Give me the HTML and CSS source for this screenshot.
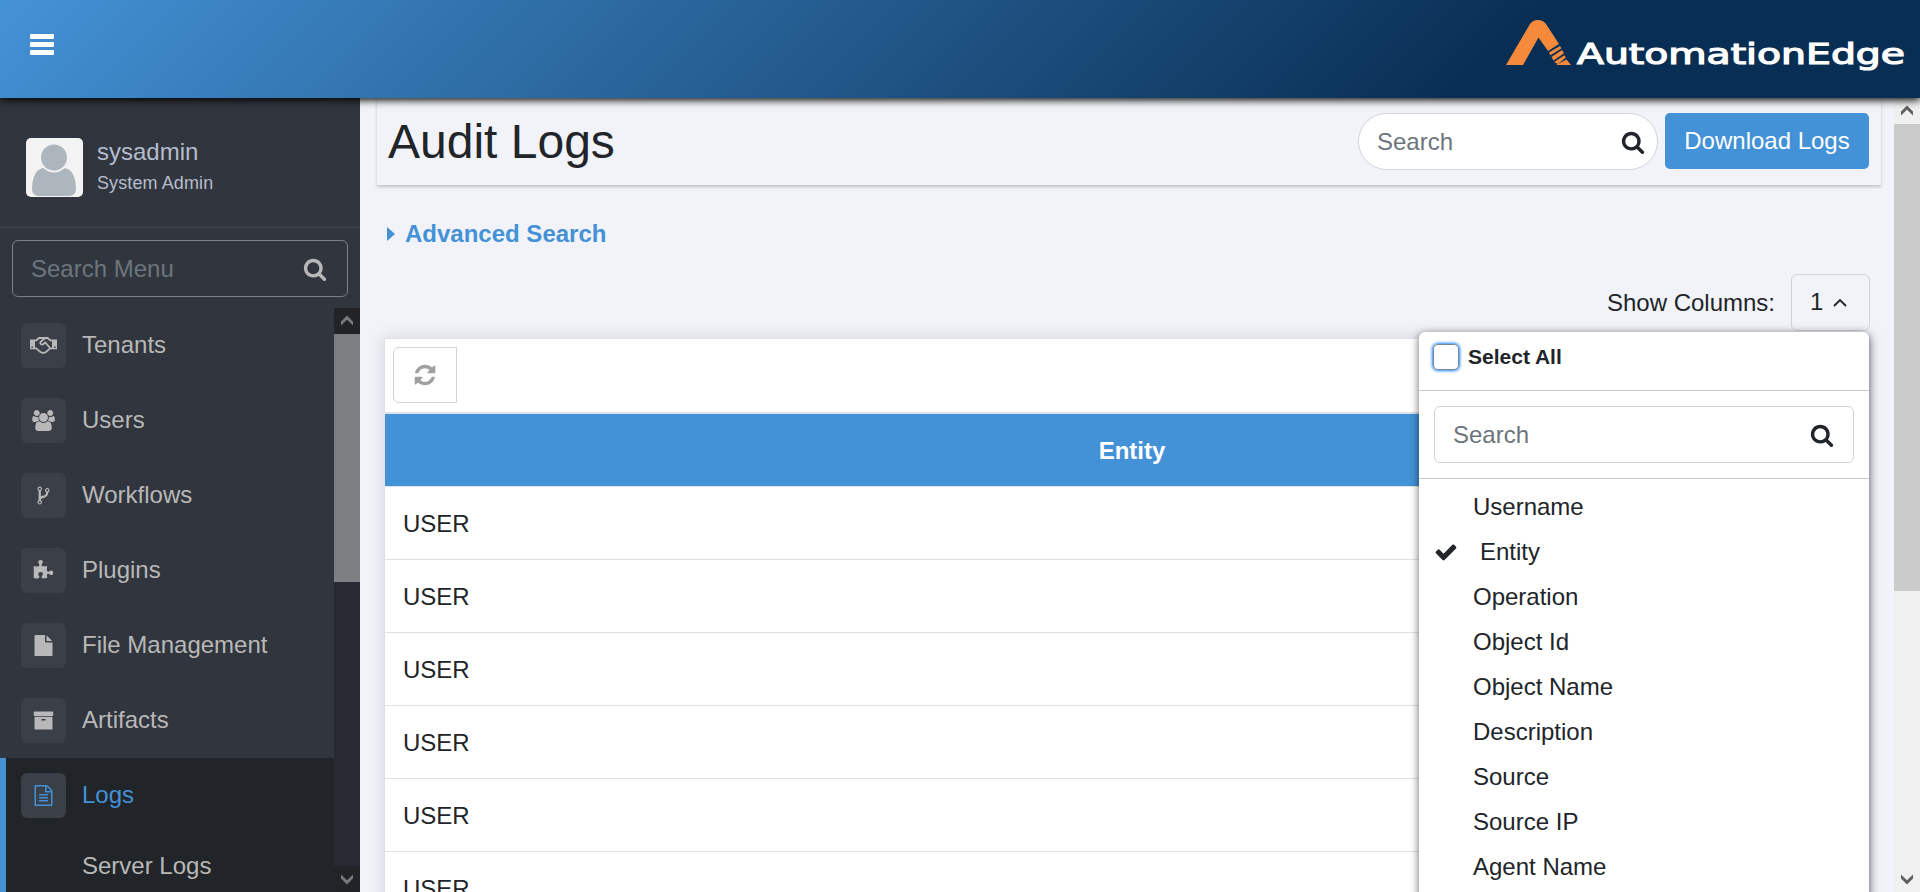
FILE: index.html
```html
<!DOCTYPE html>
<html lang="en">
<head>
<meta charset="utf-8">
<title>Audit Logs</title>
<link rel="stylesheet" href="styles.css">
</head>
<body>
<svg class="defs" aria-hidden="true">
  <symbol id="search" viewBox="0 0 1792 1792"><path d="M1216 832q0-185-131.5-316.5t-316.5-131.5-316.5 131.5-131.5 316.5 131.5 316.5 316.5 131.5 316.5-131.5 131.5-316.5zm512 832q0 52-38 90t-90 38q-54 0-90-38l-343-342q-179 124-399 124-143 0-273.5-55.5t-225-150-150-225-55.5-273.5 55.5-273.5 150-225 225-150 273.5-55.5 273.5 55.5 225 150 150 225 55.5 273.5q0 220-124 399l343 343q37 37 37 90z"/></symbol>
  <symbol id="refresh" viewBox="0 0 1792 1792"><path d="M1639 1056q0 5-1 7-64 268-268 434.5t-478 166.5q-146 0-282.5-55t-243.5-157l-129 129q-19 19-45 19t-45-19-19-45v-448q0-26 19-45t45-19h448q26 0 45 19t19 45-19 45l-137 137q71 66 161 102t187 36q134 0 250-65t186-179q11-17 53-117 8-23 30-23h192q13 0 22.5 9.5t9.5 22.5zm25-800v448q0 26-19 45t-45 19h-448q-26 0-45-19t-19-45 19-45l138-138q-148-137-349-137-134 0-250 65t-186 179q-11 17-53 117-8 23-30 23h-199q-13 0-22.5-9.5t-9.5-22.5v-7q65-268 270-434.5t480-166.5q146 0 284 55.5t245 156.5l130-129q19-19 45-19t45 19 19 45z"/></symbol>
  <symbol id="users" viewBox="64 0 1920 1792"><path d="M657 896q-162 5-265 128h-134q-82 0-138-40.5t-56-118.5q0-353 124-353 6 0 43.5 21t97.5 42.5 119 21.5q67 0 133-23-5 37-5 66 0 159 93 256zm1071 637q0 120-73 189.5t-194 69.5h-874q-121 0-194-69.5t-73-189.5q0-53 3.5-103.5t14-109 26.5-108.5 43-97.5 62-81 85.5-53.5 111.5-20q10 0 43 21.5t73 48 107 48 135 21.5 135-21.5 107-48 73-48 43-21.5q61 0 111.5 20t85.5 53.5 62 81 43 97.5 26.5 108.5 14 109 3.5 103.5zm-1024-1277q0 106-75 181t-181 75-181-75-75-181 75-181 181-75 181 75 75 181zm704 384q0 159-112.5 271.5t-271.5 112.5-271.5-112.5-112.5-271.5 112.5-271.5 271.5-112.5 271.5 112.5 112.5 271.5zm576 225q0 78-56 118.5t-138 40.5h-134q-103-123-265-128 93-97 93-256 0-29-5-66 66 23 133 23 59 0 119-21.5t97.5-42.5 43.5-21q124 0 124 353zm-128-609q0 106-75 181t-181 75-181-75-75-181 75-181 181-75 181 75 75 181z"/></symbol>
  <symbol id="fork" viewBox="0 0 1792 1792"><path d="M672 1472q0-40-28-68t-68-28-68 28-28 68 28 68 68 28 68-28 28-68zm0-1152q0-40-28-68t-68-28-68 28-28 68 28 68 68 28 68-28 28-68zm640 128q0-40-28-68t-68-28-68 28-28 68 28 68 68 28 68-28 28-68zm96 0q0 52-26 96.5t-70 69.5q-2 287-226 414-67 38-203 81-128 40-169.5 71t-41.5 100v26q44 25 70 69.5t26 96.5q0 80-56 136t-136 56-136-56-56-136q0-52 26-96.5t70-69.5v-820q-44-25-70-69.5t-26-96.5q0-80 56-136t136-56 136 56 56 136q0 52-26 96.5t-70 69.5v497q54-26 154-57 55-17 87.5-29.5t70.5-31 59-39.5 40.5-51 28-69.5 8.5-91.5q-44-25-70-69.5t-26-96.5q0-80 56-136t136-56 136 56 56 136z"/></symbol>
  <symbol id="puzzle" viewBox="0 0 1792 1792"><path d="M1728 1098q0 81-44.5 135t-123.5 54q-41 0-77.5-17.5t-59-38-56.5-38-71-17.5q-110 0-110 124 0 39 16 115t15 115v5q-22 0-33 1-34 3-97.5 11.5t-115.5 13.5-98 5q-61 0-103-26.5t-42-83.5q0-37 17.5-71t38-56.5 38-59 17.5-77.5q0-79-54-123.5t-135-44.5q-84 0-143 45.5t-59 127.5q0 43 15 83t33.5 64.5 33.5 53 15 50.5q0 45-46 89-37 35-117 35-95 0-245-24-9-2-27.5-4t-27.5-4l-13-2q-1 0-3-1-2 0-2-1v-1024q2 1 17.5 3.5t34 5 21.5 3.5q150 24 245 24 80 0 117-35 46-44 46-89 0-22-15-50.5t-33.5-53-33.5-64.5-15-83q0-82 59-127.5t144-45.5q80 0 134 44.5t54 123.5q0 41-17.5 77.5t-38 59-38 56.5-17.5 71q0 57 42 83.5t103 26.5q64 0 180-15t163-17v2q-1 2-3.5 17.5t-5 34-3.5 21.5q-24 150-24 245 0 80 35 117 44 46 89 46 22 0 50.5-15t53-33.5 64.500-33.500 83-15q82 0 127.500 59t45.500 143z"/></symbol>
  <symbol id="file" viewBox="0 0 1792 1792"><path d="M1152 512v-472q22 14 36 28l408 408q14 14 28 36h-472zm-128 32q0 40 28 68t68 28h544v1056q0 40-28 68t-68 28h-1344q-40 0-68-28t-28-68v-1600q0-40 28-68t68-28h800v544z"/></symbol>
  <symbol id="archive" viewBox="0 0 1792 1792"><path d="M1088 832q0-26-19-45t-45-19h-256q-26 0-45 19t-19 45 19 45 45 19h256q26 0 45-19t19-45zm576-192v960q0 26-19 45t-45 19h-1408q-26 0-45-19t-19-45v-960q0-26 19-45t45-19h1408q26 0 45 19t19 45zm64-448v256q0 26-19 45t-45 19h-1536q-26 0-45-19t-19-45v-256q0-26 19-45t45-19h1536q26 0 45 19t19 45z"/></symbol>
  <symbol id="filetext" viewBox="0 0 1792 1792"><path d="M1596 380q28 28 48 76t20 88v1152q0 40-28 68t-68 28h-1344q-40 0-68-28t-28-68v-1600q0-40 28-68t68-28h896q40 0 88 20t76 48zm-444-244v376h376q-10-29-22-41l-313-313q-12-12-41-22zm384 1528v-1024h-416q-40 0-68-28t-28-68v-416h-768v1536h1280zm-1024-864q0-14 9-23t23-9h704q14 0 23 9t9 23v64q0 14-9 23t-23 9h-704q-14 0-23-9t-9-23v-64zm736 224q14 0 23 9t9 23v64q0 14-9 23t-23 9h-704q-14 0-23-9t-9-23v-64q0-14 9-23t23-9h704zm0 256q14 0 23 9t9 23v64q0 14-9 23t-23 9h-704q-14 0-23-9t-9-23v-64q0-14 9-23t23-9h704z"/></symbol>
  <symbol id="check" viewBox="0 0 1792 1792"><path d="M1671 566q0 40-28 68l-724 724-136 136q-28 28-68 28t-68-28l-136-136-362-362q-28-28-28-68t28-68l136-136q28-28 68-28t68 28l294 295 656-657q28-28 68-28t68 28l136 136q28 28 28 68z"/></symbol>
  <symbol id="handshake" viewBox="0 0 27 17">
    <path d="M0 2.500h5v9.800H0zM22 2.500h5v9.800h-5zM1.500 9.600v1.400h1.400V9.600zM24.100 9.600v1.400h1.400V9.600z" fill-rule="evenodd"/>
    <path d="M5 3.300h1.500L9 1h8.500l2.800 2.300H22M5 11.400h1.200l4.300 3.700q1.600 1 3.200.8l2-.6 4.500-3.900h1.800M15.200 1 10.700 4.800q-.9 1.200.2 2.300 1.300 1 2.600-.1l1.900-1.600 4.800 5.800" fill="none" stroke="currentColor" stroke-width="1.800"/>
  </symbol>
  <symbol id="up" viewBox="0 0 12 11"><path d="M0 6.500 6 .5l6 6V10.500L6 4.800 0 10.500z"/></symbol>
</svg>

<header class="topbar">
  <button class="burger" aria-label="Toggle menu"><i></i><i></i><i></i></button>
  <svg class="logo" width="401" height="60" viewBox="0 0 401 60">
    <path fill="#f58a3c" d="M0 50 24 9Q27 5 32 5T40 9L53 29 42 36 32.500 22.500 17 50Z"/>
    <path fill="#f58a3c" d="m43 37.500 11-6.500 1.500 2.300-11 7zM45.500 42l10.500-7 2 3.200-10.500 7.300zM48.300 47l10-6.700 1.500 2.500-8 6.200zM50 50l10.500-5.500L65 50z"/>
    <text x="71" y="49" textLength="328" lengthAdjust="spacingAndGlyphs" class="logo-text">AutomationEdge</text>
  </svg>
</header>

<div class="shell">
  <aside class="sidebar">
    <div class="profile">
      <svg class="avatar" viewBox="0 0 57 59"><rect width="57" height="59" rx="5" fill="#f3f3f3"/><path d="M6 50Q7 30 19 30Q28 38 37 30Q49 30 50 50Q50 58 43 58H13Q6 58 6 50Z" fill="#adb5bd"/><circle cx="28" cy="20" r="14.500" fill="#f3f3f3"/><circle cx="28" cy="19.500" r="13" fill="#adb5bd"/></svg>
      <div class="who"><div class="name">sysadmin</div><div class="role">System Admin</div></div>
    </div>
    <div class="menu-search"><span>Search Menu</span><svg class="ico24"><use href="#search"/></svg></div>
    <div class="menu-wrap">
      <nav class="menu">
        <a class="item"><span class="tile"><svg class="hand"><use href="#handshake"/></svg></span>Tenants</a>
        <a class="item"><span class="tile"><svg class="wide"><use href="#users"/></svg></span>Users</a>
        <a class="item"><span class="tile"><svg><use href="#fork"/></svg></span>Workflows</a>
        <a class="item"><span class="tile"><svg><use href="#puzzle"/></svg></span>Plugins</a>
        <a class="item"><span class="tile"><svg><use href="#file"/></svg></span>File Management</a>
        <a class="item"><span class="tile"><svg><use href="#archive"/></svg></span>Artifacts</a>
        <div class="group">
          <a class="item active"><span class="tile"><svg><use href="#filetext"/></svg></span>Logs</a>
          <a class="sub">Server Logs</a>
        </div>
      </nav>
      <div class="scroll dark">
        <div class="btn"><svg><use href="#up"/></svg></div>
        <div class="thumb"></div>
        <div class="btn end"><svg class="down"><use href="#up"/></svg></div>
      </div>
    </div>
  </aside>

  <main class="content">
    <div class="page-head">
      <h1>Audit Logs</h1>
      <div class="pill"><span>Search</span><svg class="ico24"><use href="#search"/></svg></div>
      <button class="download">Download Logs</button>
    </div>
    <div class="advanced"><i class="caret"></i>Advanced Search</div>
    <div class="columns">
      <span>Show Columns:</span>
      <div class="picker">
        <button class="count">1<svg class="chev" viewBox="0 0 14 9"><path d="M1 8 7 2l6 6" fill="none" stroke="#212529" stroke-width="1.900"/></svg></button>
        <div class="dropdown">
          <label class="all"><span class="box"></span>Select All</label>
          <div class="filter"><div class="field"><span>Search</span><svg class="ico24"><use href="#search"/></svg></div></div>
          <ul class="options">
            <li>Username</li>
            <li class="on"><svg class="ico24"><use href="#check"/></svg>Entity</li>
            <li>Operation</li>
            <li>Object Id</li>
            <li>Object Name</li>
            <li>Description</li>
            <li>Source</li>
            <li>Source IP</li>
            <li>Agent Name</li>
          </ul>
        </div>
      </div>
    </div>
    <section class="card">
      <div class="tools"><button class="reload" aria-label="Refresh"><svg class="ico24"><use href="#refresh"/></svg></button></div>
      <div class="thead">Entity</div>
      <div class="row">USER</div>
      <div class="row">USER</div>
      <div class="row">USER</div>
      <div class="row">USER</div>
      <div class="row">USER</div>
      <div class="row">USER</div>
    </section>
  </main>
  <div class="scroll light">
    <div class="btn"><svg><use href="#up"/></svg></div>
    <div class="thumb"></div>
    <div class="btn end"><svg class="down"><use href="#up"/></svg></div>
  </div>
</div>
</body>
</html>
```
FILE: styles.css
```css
* { box-sizing: border-box; }
body {
  margin: 0;
  height: 892px;
  overflow: hidden;
  display: flex;
  flex-direction: column;
  font: 24px/36px "Liberation Sans", Arial, sans-serif;
  color: #212529;
  background: #f2f3f8;
}
button { font: inherit; color: inherit; padding: 0; border: 0; background: none; }
svg { fill: currentColor; display: block; flex: none; }
.defs { position: absolute; width: 0; height: 0; }
.ico24 { width: 24px; height: 24px; }

.topbar {
  flex: none;
  height: 98px;
  display: flex;
  justify-content: space-between;
  padding: 15px 13px 0 30px;
  background: linear-gradient(135deg, #4492d6 0%, #092e53 77%);
  box-shadow: 0 2px 8px #000;
  position: relative;
  z-index: 5;
}
.burger { width: 24px; padding-top: 19px; display: flex; flex-direction: column; gap: 3px; }
.burger i { height: 5px; width: 24px; background: #fff; border-radius: 1px; }
.logo-text { font: 28px "DejaVu Sans", sans-serif; fill: #fff; stroke: #fff; stroke-width: 1.2px; }

.shell { flex: 1; min-height: 0; display: flex; }
.sidebar { width: 360px; flex: none; background: #31353d; display: flex; flex-direction: column; color: #b8b8b8; }
.profile { height: 130px; flex: none; border-bottom: 1px solid #43474f; padding: 40px 26px 0; display: flex; gap: 14px; }
.avatar { width: 57px; height: 59px; }
.who { color: #b6bccc; }
.name { line-height: 28px; }
.role { font-size: 18px; line-height: 27px; margin-top: 4px; letter-spacing: .1px; }
.menu-search {
  margin: 12px 12px 11px;
  height: 57px;
  flex: none;
  border: 1px solid #7c8087;
  border-radius: 6px;
  display: flex;
  align-items: center;
  justify-content: space-between;
  padding: 0 20px 0 18px;
  color: #6c757d;
}
.menu-search svg { color: #b8b8b8; }
.menu-wrap { flex: 1; min-height: 0; display: flex; }
.menu { flex: 1; overflow: hidden; }
.item { display: flex; align-items: center; height: 75px; padding: 0 0 2px 21px; gap: 16px; }
.tile { width: 45px; height: 45px; margin-top: 2px; border-radius: 6px; background: #3a3f48; display: grid; place-items: center; }
.tile svg { width: 21px; height: 21px; }
.tile .wide { width: 23px; }
.tile .hand { width: 27px; height: 17px; }
.group { background: #212529; border-left: 6px solid #4391d6; height: 200px; }
.group .item { padding-left: 15px; color: #4391d6; }
.sub { display: block; padding: 15px 0 0 76px; }

.scroll { width: 26px; flex: none; display: flex; flex-direction: column; }
.scroll .btn { height: 26px; flex: none; display: grid; place-items: center; padding-bottom: 2px; }
.scroll svg { width: 12px; height: 11px; }
.scroll .down { transform: rotate(180deg); }
.scroll .end { margin-top: auto; padding-bottom: 0; }
.dark { background: #282a33; color: #77787b; }
.dark .btn { background: #222327; }
.dark .thumb { height: 248px; background: #7d7e81; }
.light { background: #f0f0f0; color: #606060; }
.light .thumb { height: 467px; background: #cbcbcb; }

.content { flex: 1; min-width: 0; padding: 0 13px 0 17px; overflow: hidden; }
.page-head {
  height: 87px;
  display: flex;
  align-items: flex-start;
  padding: 15px 12px 0 11px;
  box-shadow: 0 2px 3px rgba(0, 0, 0, .2);
}
h1 { margin: 1px auto 0 0; font-weight: 400; font-size: 48px; line-height: 56px; }
.pill, .field {
  height: 57px;
  border: 1px solid #ced4da;
  background: #fff;
  display: flex;
  align-items: center;
  justify-content: space-between;
}
.pill { width: 300px; border-radius: 29px; padding: 0 12px 0 18px; margin-right: 7px; }
.pill span, .field span { color: #6c757d; }
.download { width: 204px; height: 56px; border-radius: 5px; background: #4391d6; color: #fff; }
.advanced { display: flex; align-items: center; gap: 10px; padding-left: 10px; margin-top: 31px; font-weight: 700; color: #4391d6; }
.caret { border-left: 8px solid #4391d6; border-top: 7px solid transparent; border-bottom: 7px solid transparent; }
.columns { display: flex; justify-content: flex-end; align-items: center; gap: 16px; margin: 22px 11px 0 0; }
.picker { position: relative; }
.count { width: 79px; height: 57px; border: 1px solid #ced4da; border-radius: 6px; display: flex; align-items: center; padding: 0 0 2px 18px; gap: 10px; }
.chev { width: 14px; height: 9px; margin-top: 1px; }
.dropdown {
  position: absolute;
  top: 58px;
  right: 1px;
  width: 450px;
  height: 600px;
  background: #fff;
  border-radius: 6px;
  box-shadow: 0 2px 9px rgba(0, 0, 0, .6);
  z-index: 2;
}
.all { display: flex; gap: 9px; height: 59px; padding: 12px 15px 0 14px; border-bottom: 1px solid #c8c8c8; font-size: 21px; font-weight: 700; line-height: 25px; }
.box { width: 26px; height: 26px; border-radius: 5px; border: 1px solid #7b8794; box-shadow: 0 0 3px 1px #1a84ff; }
.filter { height: 88px; padding: 15px; border-bottom: 1px solid #c8c8c8; }
.field { border-radius: 6px; padding: 0 19px 0 18px; }
.options { list-style: none; margin: 0; padding: 5px 0 0; }
.options li { height: 45px; line-height: 45px; padding-left: 54px; display: flex; align-items: center; }
.options .on { padding-left: 15px; gap: 22px; }

.card { margin: 7px 11px 0 7px; border: 1px solid #dee2e6; background: #fff; box-shadow: 0 0 16px rgba(70, 70, 110, .18); }
.tools { height: 73px; padding: 8px; }
.reload { width: 64px; height: 56px; border: 1px solid #ced4da; border-radius: 6px 0 0 6px; display: grid; place-items: center; color: #a0a0a0; }
.thead { height: 75px; border-top: 2px solid #dee2e6; border-bottom: 1px solid #dee2e6; background: #4391d6; color: #fff; font-weight: 700; line-height: 74px; text-align: center; padding-left: 10px; }
.row { height: 73px; border-bottom: 1px solid #dee2e6; line-height: 74px; padding-left: 18px; }
```
